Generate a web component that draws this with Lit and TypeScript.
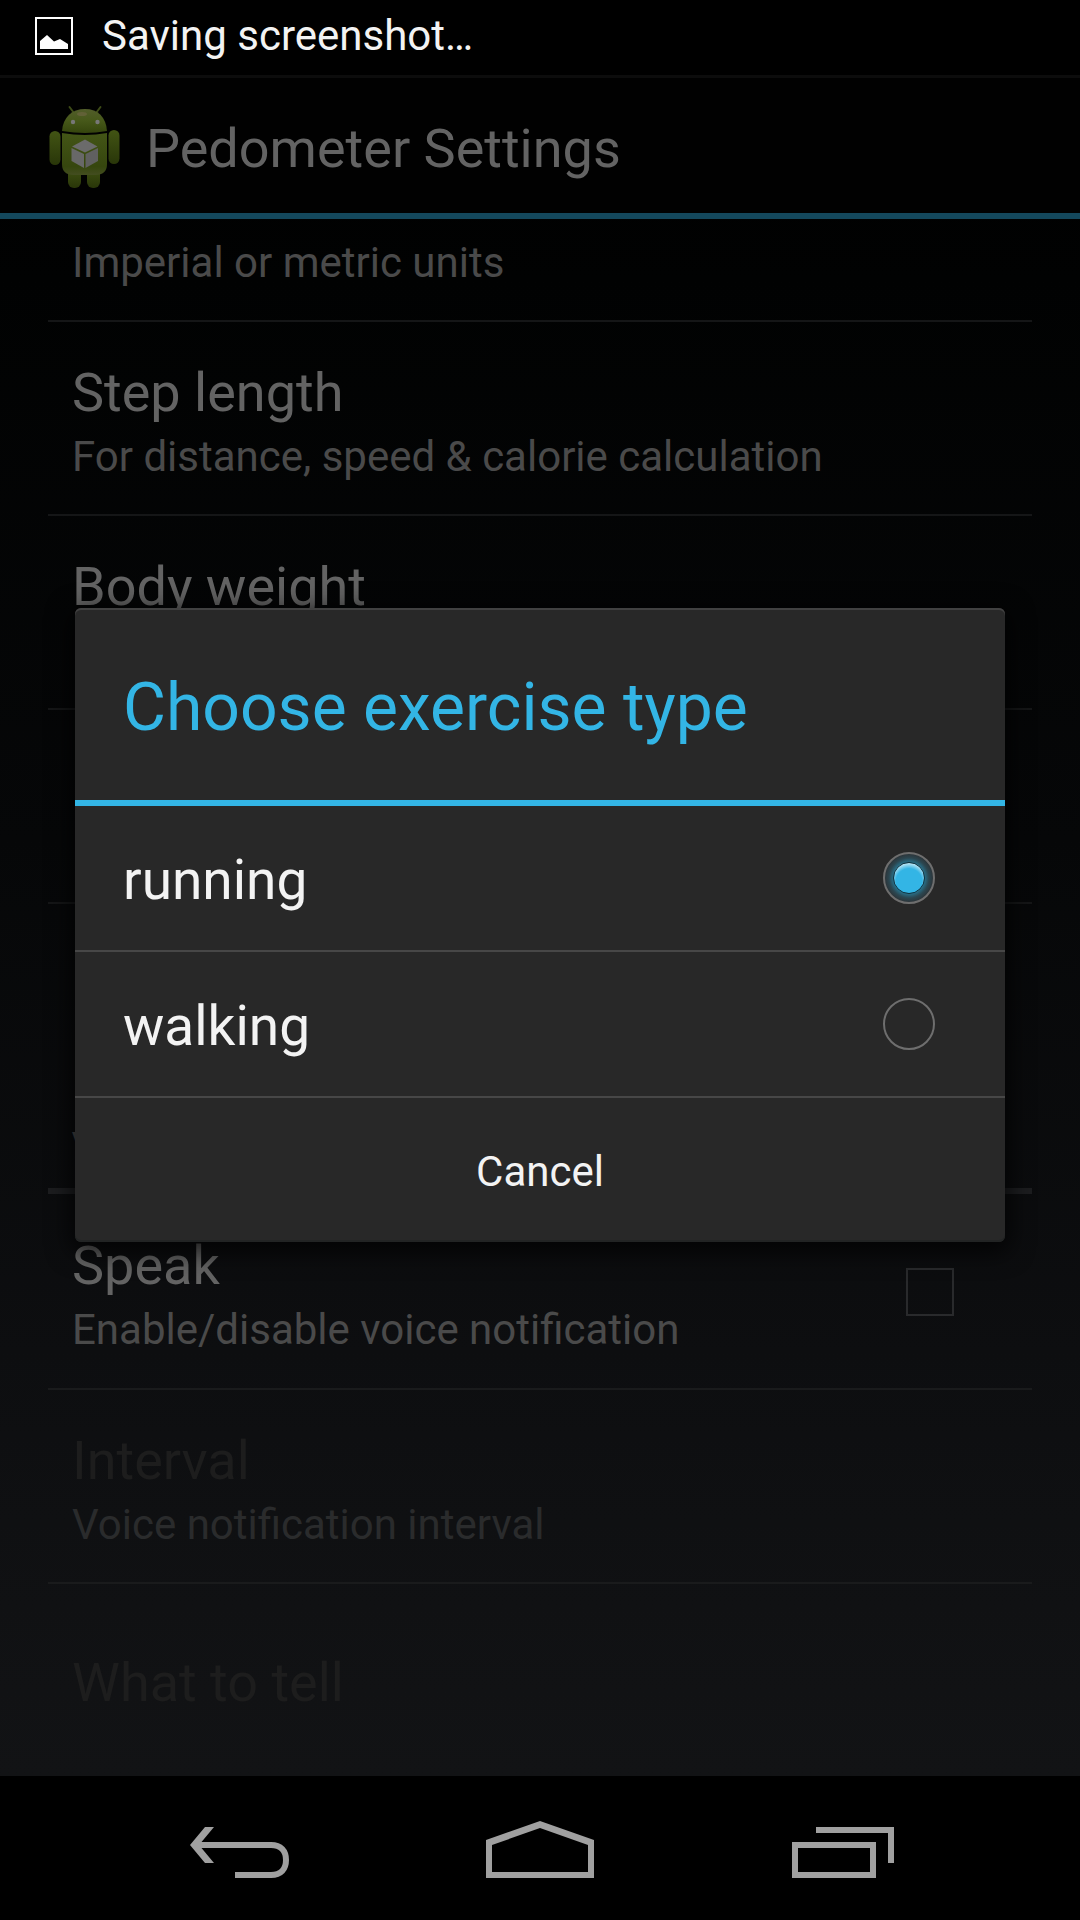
import { LitElement, html, css, svg, nothing } from "lit";
import { customElement, state } from "lit/decorators.js";

interface Preference {
  title?: string;
  summary?: string;
  kind?: "partial" | "last";
  disabled?: boolean;
}

const GENERAL: Preference[] = [
  { summary: "Imperial or metric units", kind: "partial" },
  { title: "Step length", summary: "For distance, speed & calorie calculation" },
  { title: "Body weight", summary: "" },
  {},
  { kind: "last" },
];

const VOICE: Preference[] = [
  { title: "Interval", summary: "Voice notification interval", disabled: true },
  { title: "What to tell", kind: "last", disabled: true },
];

const CHOICES = ["running", "walking"];

@customElement("app-root")
export class AppRoot extends LitElement {
  static styles = css`
    :host {
      display: flex;
      flex-direction: column;
      min-height: 100vh;
      background: #000;
      color: #636363;
      font-family: Roboto, "Noto Sans", sans-serif;
      font-size: 54px;
      line-height: 72px;
    }
    * { box-sizing: border-box; }
    h1, h2, h3, ul, p, fieldset { margin: 0; padding: 0; border: 0; font-weight: 400; list-style: none; min-width: 0; }
    button { font: inherit; color: inherit; background: none; border: 0; margin: 0; padding: 0; text-align: left; }
    svg { display: block; flex: none; }

    .status {
      display: flex;
      align-items: center;
      gap: 29px;
      height: 75px;
      padding: 0 35px 4px;
      color: #f3f3f3;
      font-size: 42px;
      line-height: 56px;
    }
    .stage {
      position: relative;
      flex: 1;
      display: flex;
      flex-direction: column;
      background: linear-gradient(#000 0%, #010202 12%, #060708 45%, #0d0e10 75%, #121315 100%);
    }
    .bar {
      display: flex;
      align-items: center;
      gap: 11px;
      height: 144px;
      padding: 3px 36px 0;
      border-top: 3px solid #0c0c0c;
      border-bottom: 6px solid #14485c;
      background: #010101;
    }
    .bar h1 { padding-top: 4px; font-size: 54px; }
    .list { padding: 0 48px; }
    .item { border-bottom: 2px solid #151617; }
    .item.last { border-bottom: 0; }
    .row {
      display: flex;
      flex-direction: column;
      justify-content: center;
      width: 100%;
      min-height: 192px;
      padding: 35px 24px 29px;
    }
    .partial .row { min-height: 101px; padding-top: 0; justify-content: flex-end; }
    .row.check { flex-direction: row; align-items: center; justify-content: space-between; min-height: 194px; padding: 35px 78px 29px 24px; }
    .title { display: block; }
    .summary { display: block; min-height: 56px; font-size: 42px; line-height: 56px; color: #4a4a4a; }
    .row:disabled .title { color: #1d1d1d; }
    .row:disabled .summary { color: #2a2b2c; }
    .lower .item { border-color: #1a1b1c; }
    .category {
      height: 98px;
      padding: 27px 24px 0;
      border-bottom: 6px solid #1c1d1f;
      font-size: 42px;
      line-height: 50px;
      font-weight: 700;
      color: #4a4a4a;
    }
    .box {
      appearance: none;
      width: 48px;
      height: 48px;
      margin: 0 0 4px;
      border: 2px solid #292a2c;
    }

    .overlay {
      position: absolute;
      inset: 0;
      display: flex;
      align-items: center;
      justify-content: center;
      padding: 0 75px 1px;
    }
    .dialog {
      flex: 1;
      border-radius: 6px;
      background: #282828;
      color: #f3f3f3;
      box-shadow: 0 6px 24px 4px rgba(0, 0, 0, 0.75), inset 0 2px 0 #414141, inset 0 -2px 0 #222424;
    }
    .dialog h2 {
      display: flex;
      align-items: center;
      height: 198px;
      padding: 8px 48px 0;
      border-bottom: 6px solid #33b5e5;
      color: #33b5e5;
      font-size: 66px;
    }
    .choice {
      display: flex;
      align-items: center;
      justify-content: space-between;
      height: 146px;
      padding: 0 70px 0 48px;
      border-bottom: 2px solid #474747;
      font-size: 55px;
    }
    .choice span { padding-top: 4px; }
    .radio {
      appearance: none;
      display: grid;
      place-items: center;
      width: 52px;
      height: 52px;
      margin: 0;
      border: 2px solid #6e6e6e;
      border-radius: 50%;
    }
    .radio:checked { background: radial-gradient(circle, #2a8aad 0 12px, #286c84 16px, #2b4650 20px, #2c353a 24px); }
    .radio:checked::before {
      content: "";
      width: 30px;
      height: 30px;
      border: 1px solid #10303c;
      border-radius: 50%;
      background: radial-gradient(circle at 50% 62%, #33b5e5 0 13px, #7fd0ee 16px, #b5e4f5 18px);
    }
    .cancel {
      display: block;
      width: 100%;
      height: 144px;
      padding-top: 4px;
      text-align: center;
      font-size: 42px;
    }

    .nav {
      display: flex;
      justify-content: center;
      gap: 180px;
      height: 144px;
      background: #000;
    }
  `;

  @state() private choice = "running";
  @state() private open = true;

  private robot() {
    return svg`<svg width="99" height="99" viewBox="36 98 99 99" aria-hidden="true">
      <defs>
        <linearGradient id="head" x1="0" y1="0" x2="0" y2="1"><stop offset="0" stop-color="#525d2a"/><stop offset=".5" stop-color="#465819"/><stop offset="1" stop-color="#35450d"/></linearGradient>
        <linearGradient id="body" x1="0" y1="0" x2="0" y2="1"><stop offset="0" stop-color="#435516"/><stop offset=".8" stop-color="#36460e"/><stop offset="1" stop-color="#434d20"/></linearGradient>
        <linearGradient id="limb" x1="0" y1="0" x2="0" y2="1"><stop offset="0" stop-color="#425414"/><stop offset="1" stop-color="#293609"/></linearGradient>
      </defs>
      <path d="M69.500 107L74 113M100.500 107L96 113" stroke="#3d4b17" stroke-width="2" stroke-linecap="round"/>
      <rect x="68" y="166" width="13" height="22" rx="6" fill="url(#limb)"/>
      <rect x="87" y="166" width="13" height="22" rx="6" fill="url(#limb)"/>
      <rect x="49.500" y="131" width="11" height="34" rx="5.500" fill="url(#limb)"/>
      <rect x="108.500" y="130" width="11" height="34" rx="5.500" fill="url(#limb)"/>
      <path d="M62 131C63 117 72 109 85 109S106 117 107 131Q96 133 85 133T62 131Z" fill="url(#head)"/>
      <path d="M62 133Q85 137 107 133V164Q107 175 95 175H74Q62 175 62 164Z" fill="url(#body)"/>
      <ellipse cx="82" cy="114" rx="5" ry="2" fill="#6b6440" opacity=".7"/>
      <circle cx="73" cy="122" r="2.200" fill="#777"/><circle cx="97.500" cy="122" r="2.200" fill="#777"/>
      <path d="M85 139.500L97.500 146.500L85 152.500L72 146.500Z" fill="#6b6b6b"/>
      <path d="M71.500 148L84 154V168L71.500 161Z" fill="#686868"/>
      <path d="M98 148L85.500 154V168L98 161Z" fill="#606060"/>
    </svg>`;
  }

  private item(p: Preference) {
    return html`<li class="item ${p.kind ?? ""}">
      <button class="row" ?disabled=${p.disabled}>
        ${p.title ? html`<span class="title">${p.title}</span>` : nothing}
        ${p.summary !== undefined ? html`<span class="summary">${p.summary}</span>` : nothing}
      </button>
    </li>`;
  }

  private dialog() {
    return html`<div class="overlay">
      <section class="dialog" role="dialog" aria-modal="true" aria-labelledby="dialog-title">
        <h2 id="dialog-title">Choose exercise type</h2>
        <fieldset aria-labelledby="dialog-title">
          ${CHOICES.map(
            (c) => html`<label class="choice">
              <span>${c}</span>
              <input class="radio" type="radio" name="exercise" .value=${c} .checked=${this.choice === c}
                @change=${() => (this.choice = c)} />
            </label>`
          )}
        </fieldset>
        <button class="cancel" @click=${() => (this.open = false)}>Cancel</button>
      </section>
    </div>`;
  }

  render() {
    return html`
      <div class="status" role="status">
        <svg width="38" height="38" viewBox="0 0 38 38" aria-hidden="true">
          <rect x="1" y="1" width="36" height="36" fill="none" stroke="#fff" stroke-width="2" />
          <path d="M5 32V24L12 18L19 24.500L25 22L33 27V32Z" fill="#fff" />
        </svg>
        <span>Saving screenshot…</span>
      </div>
      <main class="stage">
        <header class="bar">${this.robot()}<h1>Pedometer Settings</h1></header>
        <ul class="list">${GENERAL.map((p) => this.item(p))}</ul>
        <div class="list lower">
          <h3 class="category">VOICE</h3>
          <ul>
            <li class="item">
              <label class="row check">
                <span>
                  <span class="title">Speak</span>
                  <span class="summary">Enable/disable voice notification</span>
                </span>
                <input class="box" type="checkbox" />
              </label>
            </li>
            ${VOICE.map((p) => this.item(p))}
          </ul>
        </div>
        ${this.open ? this.dialog() : nothing}
      </main>
      <nav class="nav" aria-label="System">
        <button aria-label="Back">
          <svg width="120" height="144" viewBox="0 0 120 144">
            <path d="M25 51L10 69L25 87H34L19 69L34 51Z" fill="#a0a0a0" />
            <path d="M16 69H91C101 69 106 75 106 84S101 99 91 99H55" fill="none" stroke="#a0a0a0" stroke-width="6" />
          </svg>
        </button>
        <button aria-label="Home">
          <svg width="120" height="144" viewBox="0 0 120 144">
            <path d="M60 45L114 64V102H6V64ZM60 52L12 69V96H108V69Z" fill="#a0a0a0" fill-rule="evenodd" />
          </svg>
        </button>
        <button aria-label="Recent apps">
          <svg width="120" height="144" viewBox="0 0 120 144">
            <path d="M12 66H96V102H12ZM18 72V96H90V72ZM36 51H114V87H108V57H36Z" fill="#a0a0a0" fill-rule="evenodd" />
          </svg>
        </button>
      </nav>
    `;
  }
}
